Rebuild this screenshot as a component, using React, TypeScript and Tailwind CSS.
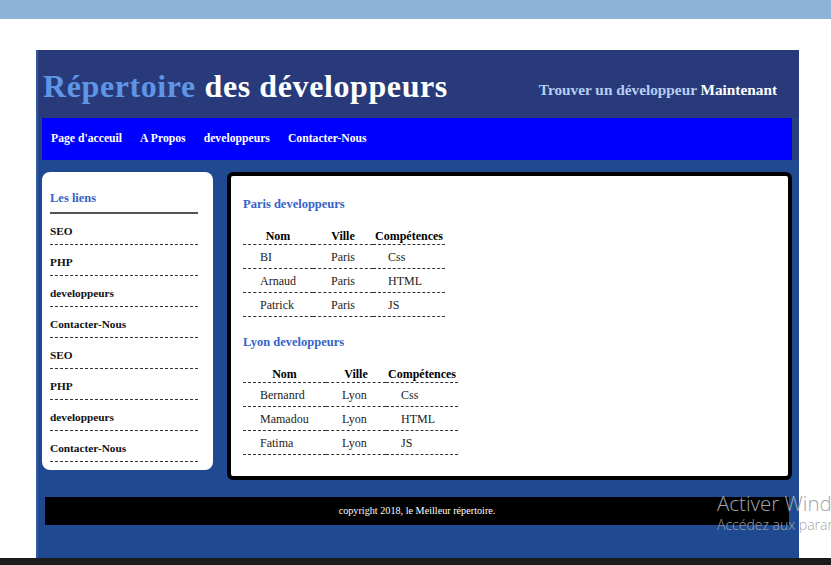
import React from "react";

const links = ["SEO", "PHP", "developpeurs", "Contacter-Nous", "SEO", "PHP", "developpeurs", "Contacter-Nous"];

type Row = [string, string, string];

function DevTable({
  title,
  rows,
  col1,
  col2pl,
  first,
}: {
  title: string;
  rows: Row[];
  col1: number;
  col2pl: string;
  first?: boolean;
}) {
  return (
    <div className={first ? "" : "mt-[18px]"}>
      <h3 className="text-[12.5px] leading-[14px] font-bold text-[#3563c9] mb-[12px]">{title}</h3>
      <table className="border-collapse table-fixed text-[12px] leading-[14px]" style={{ width: col1 + 60 + 72 }}>
        <colgroup>
          <col style={{ width: col1 }} />
          <col className="w-[60px]" />
          <col className="w-[72px]" />
        </colgroup>
        <thead>
          <tr className="border-b border-dashed border-[#333]">
            <th className="pt-[6px] pb-[1px] font-bold text-center text-black">Nom</th>
            <th className="pt-[6px] pb-[1px] font-bold text-center text-black">Ville</th>
            <th className="pt-[6px] pb-[1px] font-bold text-center text-black whitespace-nowrap">Compétences</th>
          </tr>
        </thead>
        <tbody>
          {rows.map((r, i) => (
            <tr key={i} className="border-b border-dashed border-[#333]">
              <td className="pt-[5px] pb-[4px] pl-[17px] text-[#222]">{r[0]}</td>
              <td className={`pt-[5px] pb-[4px] text-[#222] ${col2pl}`}>{r[1]}</td>
              <td className="pt-[5px] pb-[4px] pl-[15px] text-[#222]">{r[2]}</td>
            </tr>
          ))}
        </tbody>
      </table>
    </div>
  );
}

export default function App() {
  return (
    <div
      className="relative w-[831px] h-[565px] overflow-hidden bg-white"
      style={{ fontFamily: '"Liberation Serif", "Times New Roman", serif' }}
    >
      <div className="h-[19px] bg-[#8db3d8]" />
      <div className="h-[31px]" />
      <div className="ml-[36px] w-[763px] h-[508px] bg-[#1f4a91] border-l-[2px] border-[#3559a0] flex flex-col">
        {/* header */}
        <div className="h-[68px] bg-[#283a7a] flex items-center justify-between pl-[5px] pr-[22px] pt-[4px]">
          <h1 className="text-[32px] leading-[36px] font-bold tracking-[0.6px] whitespace-nowrap">
            <span className="text-[#5f95e6]">Répertoire</span>{" "}
            <span className="text-white">des développeurs</span>
          </h1>
          <div className="text-[15.3px] font-bold whitespace-nowrap pt-[8px]">
            <span className="text-[#b8cdf0]">Trouver un développeur</span>{" "}
            <span className="text-white">Maintenant</span>
          </div>
        </div>
        {/* nav */}
        <div className="bg-[#27407f]">
          <nav className="ml-[4px] mr-[7px] h-[42px] bg-[#0000ff] flex items-center gap-[18px] pl-[9px] text-[11.7px] font-bold text-white">
            <span>Page d'acceuil</span>
            <span>A Propos</span>
            <span>developpeurs</span>
            <span>Contacter-Nous</span>
          </nav>
        </div>
        {/* body */}
        <div className="flex items-start pt-[12px] pl-[4px] gap-[14px]">
          <aside className="w-[171px] h-[298px] bg-white rounded-[8px] pl-[8px] pr-[15px] pt-[19px]">
            <div className="text-[12.5px] leading-[14px] font-bold text-[#3563c9] pb-[7px] border-b-[2px] border-[#555]">
              Les liens
            </div>
            <ul>
              {links.map((l, i) => (
                <li
                  key={i}
                  className="pt-[10px] pb-[6px] text-[11.3px] leading-[14px] font-bold text-[#111] border-b border-dashed border-[#333]"
                >
                  {l}
                </li>
              ))}
            </ul>
          </aside>
          <main className="w-[565px] h-[308px] bg-white border-[4px] border-black rounded-[6px] pl-[12px] pt-[21px]">
            <DevTable
              first
              title="Paris developpeurs"
              col1={70}
              col2pl="pl-[18px]"
              rows={[
                ["BI", "Paris", "Css"],
                ["Arnaud", "Paris", "HTML"],
                ["Patrick", "Paris", "JS"],
              ]}
            />
            <DevTable
              title="Lyon developpeurs"
              col1={83}
              col2pl="pl-[16px]"
              rows={[
                ["Bernanrd", "Lyon", "Css"],
                ["Mamadou", "Lyon", "HTML"],
                ["Fatima", "Lyon", "JS"],
              ]}
            />
          </main>
        </div>
        {/* footer */}
        <footer className="mt-[17px] ml-[7px] w-[744px] h-[28px] bg-black flex items-center justify-center text-[10.2px] text-white">
          copyright 2018, le Meilleur répertoire.
        </footer>
      </div>
      <div className="h-[7px] bg-[#1c1c1c]" />

      {/* Windows activation watermark */}
      <div
        className="absolute left-[717px] top-[491px] text-[#a3a6ad] whitespace-nowrap pointer-events-none"
        style={{ fontFamily: '"Open Sans", "Noto Sans", sans-serif' }}
      >
        <div className="text-[20.5px] leading-[25px] font-light">Activer Windows</div>
        <div className="text-[14px] leading-[18px] font-light">Accédez aux paramètres pour activer Windows.</div>
      </div>
    </div>
  );
}
